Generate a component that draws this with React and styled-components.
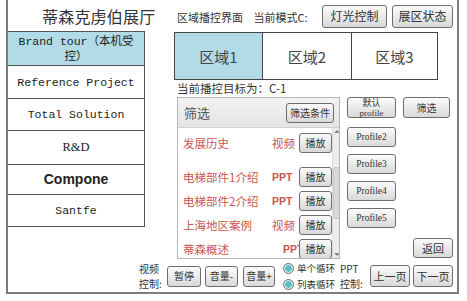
import React from 'react';
import styled, { createGlobalStyle } from 'styled-components';

const CJK = `"Noto Sans CJK SC", sans-serif`;
const MONO = `"Liberation Mono", "Noto Sans CJK SC", monospace`;
const SERIF = `"Liberation Serif", "Noto Sans CJK SC", serif`;

const Global = createGlobalStyle`
  html, body { margin: 0; padding: 0; background: #fff; }
  * { box-sizing: border-box; }
`;

const Frame = styled.div`
  margin-left: 6px;
  width: 453px;
  height: 294px;
  border: 2px solid #7c7c7c;
  border-top: none;
  display: grid;
  grid-template-columns: 137px 1fr;
  grid-template-rows: 260px 32px;
  font-family: ${CJK};
  color: #333;
`;

const LeftCol = styled.div`
  display: flex;
  flex-direction: column;
`;

const Title = styled.div`
  height: 31px;
  padding-left: 34px;
  display: flex;
  align-items: center;
  white-space: nowrap;
  font-size: 16px;
  color: #333;
  letter-spacing: 0.2px;
`;

const Nav = styled.div`
  border-top: 1px solid #555;
  border-right: 1px solid #555;
  border-bottom: 1px solid #555;
  display: flex;
  flex-direction: column;
`;

const NavItem = styled.div`
  height: ${p => p.h}px;
  border-top: ${p => (p.first ? 'none' : '1px solid #555')};
  background: ${p => (p.active ? '#b1dce7' : '#fff')};
  display: flex;
  align-items: center;
  justify-content: center;
  text-align: center;
  line-height: 15px;
  padding: 0 4px;
  font-family: ${p => (p.sans ? '"Liberation Sans", sans-serif' : p.serif ? SERIF : MONO)};
  font-size: ${p => (p.sans ? '14px' : p.serif ? '12.5px' : '11.5px')};
  font-weight: ${p => (p.sans ? 600 : 400)};
  color: #222;
`;

const Main = styled.div`
  display: flex;
  flex-direction: column;
`;

const TopBar = styled.div`
  height: 32px;
  display: flex;
  align-items: center;
  padding: 0 4px 0 32px;
  font-size: 11px;
`;

const TopText = styled.span`
  word-spacing: 8px;
  margin-right: auto;
  padding-top: 2px;
`;

const Btn = styled.button`
  width: ${p => p.w}px;
  height: ${p => p.h || 21}px;
  margin-left: ${p => p.ml || 0}px;
  padding: 0;
  border: 1px solid #6e6e6e;
  border-radius: 3px;
  background: linear-gradient(#fbfbfb, #d9d9d9);
  font-family: ${p => (p.latin ? SERIF : CJK)};
  font-size: ${p => p.fs || 11}px;
  line-height: 10px;
  color: #333;
  flex-shrink: 0;
`;

const Zones = styled.div`
  margin-left: 29px;
  width: 264px;
  height: 48px;
  border: 1px solid #444;
  display: grid;
  grid-template-columns: 87px 89px 1fr;
`;

const Zone = styled.div`
  display: flex;
  align-items: center;
  justify-content: center;
  background: ${p => (p.active ? '#b1dce7' : '#fff')};
  border-left: ${p => (p.active ? 'none' : '1px solid #444')};
  font-size: 15px;
  color: #444;
`;

const Target = styled.div`
  height: 17px;
  padding-left: 32px;
  font-size: 11.5px;
  line-height: 17px;
`;

const Content = styled.div`
  height: 162px;
  display: flex;
`;

const Panel = styled.div`
  margin-left: 32px;
  width: 163px;
  border: 1px solid #b5b5b5;
  display: flex;
  flex-direction: column;
  overflow: hidden;
`;

const PanelHead = styled.div`
  height: 30px;
  flex-shrink: 0;
  background: linear-gradient(#f3f3f3, #e4e4e4);
  border-bottom: 1px solid #d0d0d0;
  display: flex;
  align-items: center;
  justify-content: space-between;
  padding: 0 5px 0 6px;
  font-size: 13px;
  color: #555;
`;

const PanelBody = styled.div`
  flex: 1;
  display: flex;
  overflow: hidden;
`;

const List = styled.div`
  flex: 1;
  padding-top: 3px;
`;

const Row = styled.div`
  height: 24px;
  margin-bottom: ${p => p.gap || 0}px;
  display: flex;
  align-items: center;
  padding-left: 5px;
  font-size: 11.5px;
  color: #c8564f;
`;

const Name = styled.span`
  width: 89px;
`;

const Kind = styled.span`
  width: 27px;
  padding-left: ${p => p.shift || 0}px;
  font-family: ${p => (p.latin ? '"Liberation Sans", sans-serif' : CJK)};
  font-weight: ${p => (p.latin ? 700 : 400)};
  font-size: ${p => (p.latin ? 10.5 : 11.5)}px;
  white-space: nowrap;
`;

const Scroll = styled.div`
  width: 9px;
  background: #ececec;
  border-left: 1px solid #dcdcdc;
  display: flex;
  flex-direction: column;
  align-items: center;
  justify-content: space-between;
  padding: 2px 0;
`;

const Thumb = styled.div`
  width: 7px;
  height: 52px;
  background: #d8d8d8;
  border: 1px solid #c8c8c8;
  border-radius: 2px;
`;

const Arrow = styled.div`
  width: 0;
  height: 0;
  border-left: 3px solid transparent;
  border-right: 3px solid transparent;
  ${p => (p.up ? 'border-bottom: 3px solid #888;' : 'border-top: 3px solid #888;')}
`;

const Side = styled.div`
  margin-left: 7px;
  width: 106px;
  display: flex;
  flex-direction: column;
`;

const SideRow = styled.div`
  display: flex;
  justify-content: ${p => (p.end ? 'flex-end' : 'flex-start')};
  margin-top: ${p => p.mt || 0}px;
`;

const Bottom = styled.div`
  grid-column: 1 / -1;
  display: flex;
  align-items: center;
  padding-left: 131px;
  font-size: 11px;
`;

const Label = styled.div`
  width: ${p => p.w}px;
  display: flex;
  flex-direction: column;
  font-family: ${CJK};
  font-size: 10px;
  line-height: 15px;
  white-space: nowrap;
  color: #333;
`;

const Loops = styled.div`
  margin-left: 8px;
  display: flex;
  flex-direction: column;
  gap: 2px;
  width: 57px;
`;

const Loop = styled.div`
  display: flex;
  align-items: center;
  gap: 3px;
  font-size: 9.5px;
  line-height: 14px;
`;

const Radio = styled.span`
  width: 11px;
  height: 11px;
  border-radius: 50%;
  border: 1px solid #6c6c6c;
  background: radial-gradient(circle, #58c1bd 0 3px, #d3ecec 3.5px);
  flex-shrink: 0;
`;

const files = [
  { name: '发展历史', kind: '视频', gap: 10 },
  { name: '电梯部件1介绍', kind: 'PPT', latin: true },
  { name: '电梯部件2介绍', kind: 'PPT', latin: true },
  { name: '上海地区案例', kind: '视频' },
  { name: '蒂森概述', kind: 'PPT', latin: true, shift: 11 },
];

const navItems = [
  { label: 'Brand tour（本机受控）', h: 33, active: true },
  { label: 'Reference Project', h: 33 },
  { label: 'Total Solution', h: 32 },
  { label: 'R&D', h: 34, serif: true },
  { label: 'Compone', h: 30, sans: true },
  { label: 'Santfe', h: 32 },
];

export default function App() {
  return (
    <>
      <Global />
      <Frame>
        <LeftCol>
          <Title>蒂森克虏伯展厅</Title>
          <Nav>
            {navItems.map((n, i) => (
              <NavItem key={n.label} first={i === 0} h={n.h} active={n.active} serif={n.serif} sans={n.sans}>
                {n.label}
              </NavItem>
            ))}
          </Nav>
        </LeftCol>

        <Main>
          <TopBar>
            <TopText>区域播控界面 当前模式C:</TopText>
            <Btn w={65} h={23} fs={12}>灯光控制</Btn>
            <Btn w={61} h={23} fs={12} ml={5}>展区状态</Btn>
          </TopBar>
          <Zones>
            <Zone active>区域1</Zone>
            <Zone>区域2</Zone>
            <Zone>区域3</Zone>
          </Zones>
          <Target>当前播控目标为：C-1</Target>
          <Content>
            <Panel>
              <PanelHead>
                筛选
                <Btn w={48} h={20} fs={10}>筛选条件</Btn>
              </PanelHead>
              <PanelBody>
                <List>
                  {files.map(f => (
                    <Row key={f.name} gap={f.gap}>
                      <Name>{f.name}</Name>
                      <Kind latin={f.latin} shift={f.shift}>{f.kind}</Kind>
                      <Btn w={33} h={20} fs={10}>播放</Btn>
                    </Row>
                  ))}
                </List>
                <Scroll>
                  <Arrow up />
                  <Thumb />
                  <Arrow />
                </Scroll>
              </PanelBody>
            </Panel>
            <Side>
              <SideRow>
                <Btn w={49} h={21} fs={9} latin>默认<br />profile</Btn>
                <Btn w={47} h={21} fs={10} ml={7}>筛选</Btn>
              </SideRow>
              {[2, 3, 4, 5].map((n, i) => (
                <SideRow key={n} mt={i === 0 ? 9 : 7}>
                  <Btn w={49} h={20} fs={9.5} latin>Profile{n}</Btn>
                </SideRow>
              ))}
              <SideRow mt={10} end>
                <Btn w={40} h={20} fs={11}>返回</Btn>
              </SideRow>
            </Side>
          </Content>
        </Main>

        <Bottom>
          <Label w={28}><span>视频</span><span>控制:</span></Label>
          <Btn w={34} fs={10}>暂停</Btn>
          <Btn w={33} fs={10} ml={4}>音量-</Btn>
          <Btn w={32} fs={10} ml={5}>音量+</Btn>
          <Loops>
            <Loop><Radio />单个循环</Loop>
            <Loop><Radio />列表循环</Loop>
          </Loops>
          <Label w={30}><span>PPT</span><span>控制:</span></Label>
          <Btn w={40} h={22} fs={11}>上一页</Btn>
          <Btn w={40} h={22} fs={11} ml={3}>下一页</Btn>
        </Bottom>
      </Frame>
    </>
  );
}
